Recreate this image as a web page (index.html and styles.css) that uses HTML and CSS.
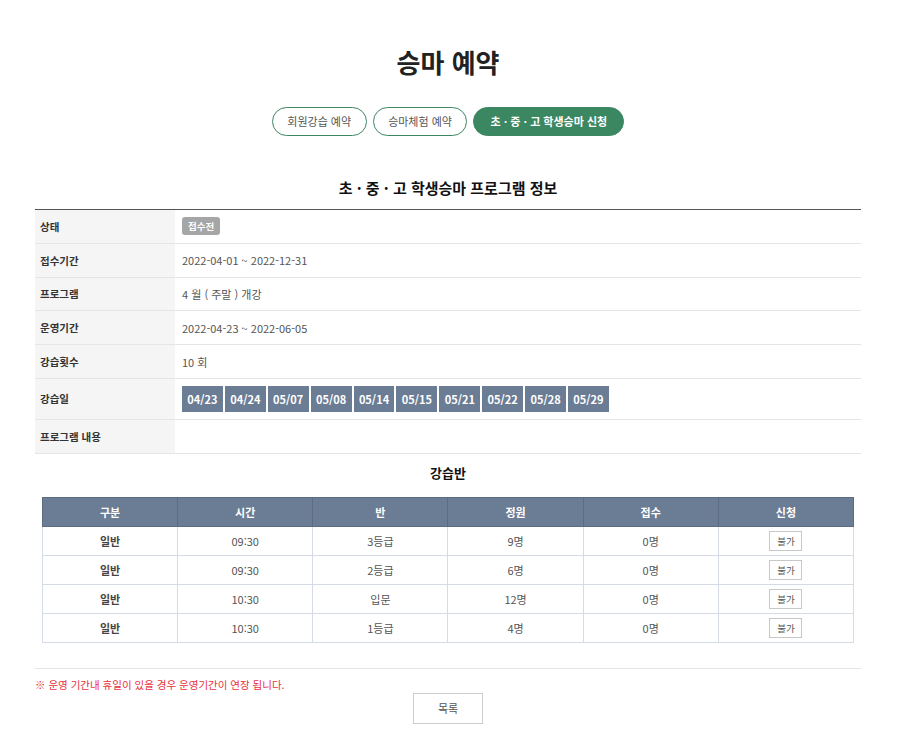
FILE: index.html
```html
<!DOCTYPE html>
<html lang="ko">
<head>
<meta charset="utf-8">
<title>승마 예약</title>
<link rel="stylesheet" href="styles.css">
</head>
<body>
<div class="page">
  <h1 class="title">승마 예약</h1>
  <div class="tabs">
    <a class="tab">회원강습 예약</a>
    <a class="tab">승마체험 예약</a>
    <a class="tab active">초 · 중 · 고 학생승마 신청</a>
  </div>
  <h2 class="sec-title">초 · 중 · 고 학생승마 프로그램 정보</h2>
  <div class="info">
    <div class="row"><div class="th">상태</div><div class="td"><span class="badge">접수전</span></div></div>
    <div class="row"><div class="th">접수기간</div><div class="td">2022-04-01 ~ 2022-12-31</div></div>
    <div class="row"><div class="th">프로그램</div><div class="td">4 월 ( 주말 ) 개강</div></div>
    <div class="row"><div class="th">운영기간</div><div class="td">2022-04-23 ~ 2022-06-05</div></div>
    <div class="row"><div class="th">강습횟수</div><div class="td">10 회</div></div>
    <div class="row tall"><div class="th">강습일</div><div class="td chips">
      <span class="chip">04/23</span><span class="chip">04/24</span><span class="chip">05/07</span><span class="chip">05/08</span><span class="chip">05/14</span><span class="chip">05/15</span><span class="chip">05/21</span><span class="chip">05/22</span><span class="chip">05/28</span><span class="chip">05/29</span>
    </div></div>
    <div class="row"><div class="th">프로그램 내용</div><div class="td"></div></div>
  </div>
  <h3 class="sub-title">강습반</h3>
  <table class="classes">
    <thead>
      <tr><th>구분</th><th>시간</th><th>반</th><th>정원</th><th>접수</th><th>신청</th></tr>
    </thead>
    <tbody>
      <tr><td class="b">일반</td><td>09:30</td><td>3등급</td><td>9명</td><td>0명</td><td><span class="btn-sm">불가</span></td></tr>
      <tr><td class="b">일반</td><td>09:30</td><td>2등급</td><td>6명</td><td>0명</td><td><span class="btn-sm">불가</span></td></tr>
      <tr><td class="b">일반</td><td>10:30</td><td>입문</td><td>12명</td><td>0명</td><td><span class="btn-sm">불가</span></td></tr>
      <tr><td class="b">일반</td><td>10:30</td><td>1등급</td><td>4명</td><td>0명</td><td><span class="btn-sm">불가</span></td></tr>
    </tbody>
  </table>
  <div class="foot">
    <p class="note">※ 운영 기간내 휴일이 있을 경우 운영기간이 연장 됩니다.</p>
    <div class="foot-btns"><a class="btn-list">목록</a></div>
  </div>
</div>
</body>
</html>
```
FILE: styles.css
```css
* { box-sizing: border-box; }
html, body { margin: 0; padding: 0; background: #fff; }
body {
  font-family: "Noto Sans CJK KR", "Noto Sans", sans-serif;
  color: #333;
  font-size: 11px;
  padding-right: 2px;
}
.page { width: 826px; margin: 0 auto; padding-top: 44px; }
.title {
  margin: 0; text-align: center; font-size: 26px; font-weight: 700;
  color: #222; line-height: 36px;
}
.tabs { display: flex; justify-content: center; gap: 6px; margin-top: 27px; }
.tab {
  display: inline-flex; align-items: center; justify-content: center;
  height: 29px; padding: 0 14.5px; border: 1px solid #3b8762; border-radius: 15px;
  font-size: 11px; color: #555; background: #fff; line-height: 1;
}
.tab.active { background: #3b8762; color: #fff; font-weight: 700; padding: 0 16px; }
.sec-title {
  margin: 41px 0 0; text-align: center; font-size: 15px; font-weight: 700; color: #111;
  line-height: 22px;
}
.info { margin-top: 10px; border-top: 1px solid #555; }
.row { display: flex; height: 33.8px; border-bottom: 1px solid #e5e5e5; }
.row.tall { height: 41px; }
.th {
  width: 140px; background: #f5f5f5; display: flex; align-items: center;
  padding-left: 5px; font-weight: 700; color: #333; font-size: 10.5px;
}
.td { flex: 1; display: flex; align-items: center; padding-left: 7px; color: #555; }
.badge {
  display: inline-block; background: #a6a6a6; color: #fff; font-size: 9.5px;
  font-weight: 700; padding: 0 6px; height: 18px; line-height: 18px; border-radius: 3px;
}
.chips { gap: 2px; }
.chip {
  display: inline-block; width: 40.9px; height: 26px; line-height: 26px; text-align: center;
  background: #6b7c95; color: #fff; font-weight: 700; font-size: 11px;
}
.sub-title {
  margin: 9px 0 0; text-align: center; font-size: 13px; font-weight: 700; color: #111;
  line-height: 20px;
}
.classes {
  margin: 14px auto 0; width: 812px; border-collapse: collapse; table-layout: fixed;
}
.classes th {
  background: #6b7c95; color: #fff; font-weight: 700; height: 29px;
  border: 1px solid #5d6c82; font-size: 11px; padding: 0;
}
.classes td {
  height: 29px; border: 1px solid #d5dbe6; text-align: center; color: #555; padding: 0;
}
.classes td.b { font-weight: 700; color: #444; }
.btn-sm {
  display: inline-block; width: 33px; height: 20px; line-height: 18px;
  border: 1px solid #c8c8c8; font-size: 9.5px; color: #555; background: #fff;
}
.foot { margin-top: 25px; border-top: 1px solid #e5e5e5; }
.note { margin: 8px 0 0; color: #e8303c; font-size: 10.5px; line-height: 15px; }
.foot-btns { display: flex; justify-content: center; margin-top: 1px; }
.btn-list {
  display: inline-flex; align-items: center; justify-content: center;
  width: 70px; height: 31px; border: 1px solid #ccc; color: #555; font-size: 11px;
}
```
